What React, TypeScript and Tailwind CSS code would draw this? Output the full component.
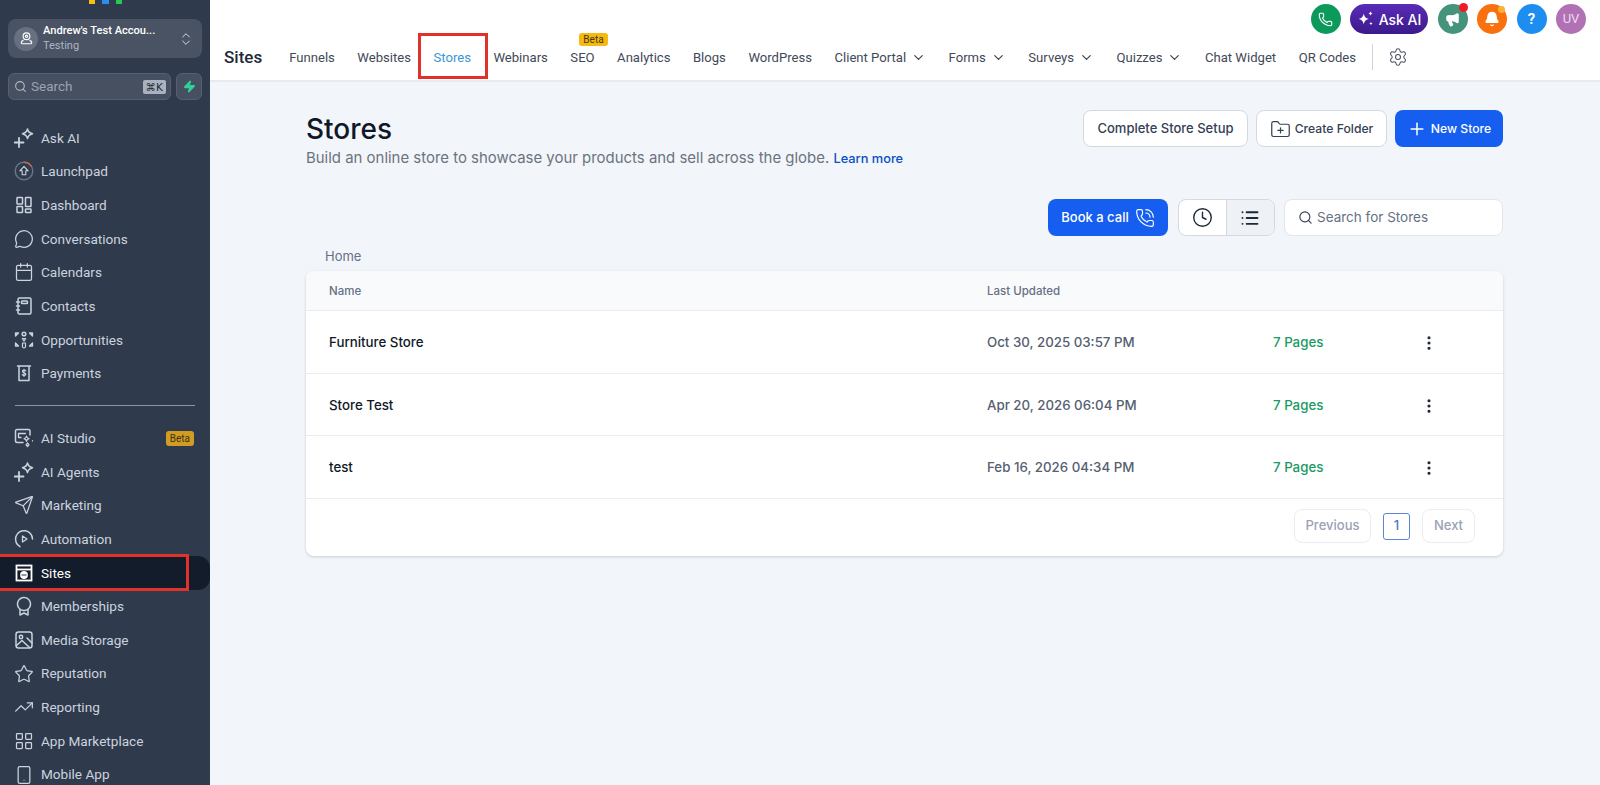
import type { ReactNode } from 'react';
import {
  Bell, Calendar, ChevronDown, ChevronsUpDown, Clock, FolderPlus, LayoutGrid, List, MessageCircle,
  Megaphone, MoreVertical, Phone, PhoneCall, Plus, Search, Send, Settings, Smartphone, Star, TrendingUp, Zap,
} from 'lucide-react';

const stroke = {
  fill: 'none',
  stroke: 'currentColor',
  strokeWidth: 1.5,
  strokeLinecap: 'round' as const,
  strokeLinejoin: 'round' as const,
};

function Ico({ children }: { children: ReactNode }) {
  return (
    <svg viewBox="0 0 20 20" className="w-5 h-5 shrink-0" {...stroke}>
      {children}
    </svg>
  );
}

const SparkIcon = () => (
  <Ico>
    <path d="M5 10v9M.5 14.500h9" strokeWidth="1.800" />
    <path d="M13.500 1c.6 2.800 1.700 3.900 5 4.800-3.300.9-4.400 2-5 4.800-.6-2.800-1.700-3.900-5-4.800 3.300-.9 4.400-2 5-4.800z" />
  </Ico>
);
const LaunchIcon = () => (
  <Ico>
    <circle cx="10" cy="10" r="8.800" stroke="#64748b" />
    <path d="M10 1.200a8.800 8.800 0 0 1 7.300 3.900" stroke="#c2694a" />
    <path d="M10 5.500l-4.200 4.300h2.400v4h3.600v-4h2.400z" strokeWidth="1.100" />
  </Ico>
);
const DashIcon = () => (
  <Ico>
    <rect x="3" y="2.500" width="5.500" height="6.500" rx=".6" />
    <rect x="11.500" y="2.500" width="5.500" height="9" rx=".6" />
    <rect x="3" y="11.500" width="5.500" height="6" rx=".6" />
    <rect x="11.500" y="14" width="5.500" height="3.500" rx=".6" />
  </Ico>
);
const ContactsIcon = () => (
  <Ico>
    <rect x="4" y="2" width="13" height="16" rx="1.500" />
    <rect x="7.500" y="5" width="6" height="2.500" rx=".8" />
    <path d="M2.500 6h3M2.500 10h3M2.500 14h3" />
  </Ico>
);
const OppIcon = () => (
  <Ico>
    <circle cx="10" cy="4" r="1.800" />
    <path d="M8.300 8.500h3.400l-1.700 2.600zM8.500 13v3.500a1.500 1.500 0 0 0 3 0V13z" strokeWidth="1.200" />
    <path d="M1.500 3h3M1.500 3v3M18.500 3h-3M18.500 3v3M1.500 6l3-3M18.500 6l-3-3M1.500 16h3M1.500 16v-3M18.500 16h-3M18.500 16v-3M1.500 13l3 3M18.500 13l-3 3" strokeWidth="1.300" />
  </Ico>
);
const PayIcon = () => (
  <Ico>
    <path d="M3.500 3h13M5 3v14.500h10V3" />
    <path d="M11.800 7.800c-.5-.8-3.400-1-3.400.6 0 1.700 3.400 1 3.400 2.800 0 1.500-2.900 1.500-3.600.5M10 6.300v7" strokeWidth="1.200" />
  </Ico>
);
const StudioIcon = () => (
  <Ico>
    <path d="M9 14.500H3a1.500 1.500 0 0 1-1.500-1.500V3A1.500 1.500 0 0 1 3 1.500h11.500A1.500 1.500 0 0 1 16 3v4" />
    <path d="M4.500 5.500h7M4.500 5.500v4M4.500 9.500h2.500" strokeWidth="1.300" />
    <path d="M12.500 8c.3 1.700 1 2.400 2.500 2.700-1.500.3-2.200 1-2.500 2.700-.3-1.700-1-2.400-2.500-2.700 1.500-.3 2.200-1 2.500-2.700zM13.500 15l1.500 1.800-1.500 1.700-1.500-1.700zM18.500 12.500v.5" strokeWidth="1.200" />
  </Ico>
);
const AutoIcon = () => (
  <Ico>
    <path d="M6 17.700A8.500 8.500 0 1 1 18.500 10" />
    <path d="M8.500 7l4.500 3-4.500 3z" strokeWidth="1.300" />
  </Ico>
);
const SitesIcon = () => (
  <svg viewBox="0 0 20 20" className="w-5 h-5 shrink-0" fill="none" stroke="#fff" strokeWidth="1.800">
    <rect x="2.500" y="2.500" width="15" height="15" />
    <path d="M2.500 6.500h15" />
    <circle cx="10" cy="12" r="3" fill="#fff" />
    <path d="M7.500 12h5" stroke="#111a28" strokeWidth=".9" />
  </svg>
);
const BadgeIcon = () => (
  <Ico>
    <circle cx="10" cy="8" r="6.500" strokeDasharray="3.500 .6" />
    <path d="M6 13.500V19l4-2 4 2v-5.500" />
  </Ico>
);
const MediaIcon = () => (
  <Ico>
    <rect x="2" y="2" width="16" height="16" rx="2.500" />
    <circle cx="7" cy="7" r="1.700" />
    <path d="M2.500 15.500L8 10.500l7.500 7M13 8l5 5" />
  </Ico>
);

type Item = { label: string; icon: ReactNode; badge?: boolean };

const topItems: Item[] = [
  { label: 'Ask AI', icon: <SparkIcon /> },
  { label: 'Launchpad', icon: <LaunchIcon /> },
  { label: 'Dashboard', icon: <DashIcon /> },
  { label: 'Conversations', icon: <MessageCircle size={20} strokeWidth={1.5} /> },
  { label: 'Calendars', icon: <Calendar size={20} strokeWidth={1.5} /> },
  { label: 'Contacts', icon: <ContactsIcon /> },
  { label: 'Opportunities', icon: <OppIcon /> },
  { label: 'Payments', icon: <PayIcon /> },
];

const bottomBefore: Item[] = [
  { label: 'AI Studio', icon: <StudioIcon />, badge: true },
  { label: 'AI Agents', icon: <SparkIcon /> },
  { label: 'Marketing', icon: <Send size={20} strokeWidth={1.5} /> },
  { label: 'Automation', icon: <AutoIcon /> },
];

const bottomAfter: Item[] = [
  { label: 'Memberships', icon: <BadgeIcon /> },
  { label: 'Media Storage', icon: <MediaIcon /> },
  { label: 'Reputation', icon: <Star size={20} strokeWidth={1.5} /> },
  { label: 'Reporting', icon: <TrendingUp size={20} strokeWidth={1.5} /> },
  { label: 'App Marketplace', icon: <LayoutGrid size={20} strokeWidth={1.5} /> },
  { label: 'Mobile App', icon: <Smartphone size={20} strokeWidth={1.5} /> },
];

function NavRow({ item }: { item: Item }) {
  return (
    <div className="h-[33.67px] shrink-0 flex items-center pl-[14px] pr-[16px] gap-[7px] text-[13.6px] text-[#cbd3df]">
      <span className="w-5 flex justify-center">{item.icon}</span>
      <span className="flex-1">{item.label}</span>
      {item.badge && (
        <span className="h-[15px] px-[4px] rounded-[3px] bg-[#d29c22] text-[#3b3418] text-[10px] leading-[15px]">Beta</span>
      )}
    </div>
  );
}

function Sidebar() {
  return (
    <aside className="w-[210px] shrink-0 h-[785px] overflow-hidden bg-[#2f3a4c] flex flex-col font-['Roboto',sans-serif]">
      <div className="h-[4px] shrink-0 flex justify-center gap-[7px] pl-[1px]">
        <span className="w-[6px] bg-[#f6c116]" />
        <span className="w-[7px] bg-[#2a8ff0]" />
        <span className="w-[6px] bg-[#27c94f]" />
      </div>
      <div className="mx-2 mt-[15px] h-[39px] shrink-0 rounded-lg bg-[#495364] flex items-center pl-[6px] pr-[8px] gap-[5px]">
        <span className="w-6 h-6 rounded-full bg-[#667080] flex items-center justify-center text-white">
          <svg viewBox="0 0 20 20" className="w-[15px] h-[15px]" fill="none" stroke="currentColor" strokeWidth="1.500">
            <circle cx="10" cy="7" r="4.500" />
            <circle cx="10" cy="7" r="1.500" />
            <path d="M6 12.500c-2 .5-3 1.500-3 3 0 1 1 1.500 2 1.500h10c1 0 2-.5 2-1.500 0-1.500-1-2.500-3-3" />
          </svg>
        </span>
        <div className="flex-1 min-w-0">
          <div className="text-[11.1px] leading-[14px] font-medium text-white whitespace-nowrap">Andrew's Test Accou...</div>
          <div className="text-[11px] leading-[14px] mt-[1px] text-[#aeb6c3]">Testing</div>
        </div>
        <ChevronsUpDown size={16} strokeWidth={1.5} className="text-[#d5dae2]" />
      </div>
      <div className="mx-2 mt-[15px] flex gap-[5px] h-[27px] shrink-0">
        <div className="flex-1 rounded-md bg-[#465061] border border-[#566072] flex items-center pl-[5px] pr-[4px] gap-[4px]">
          <Search size={13} className="text-[#b3bbc7]" />
          <span className="flex-1 text-[13.500px] text-[#9aa3b2]">Search</span>
          <span className="px-[3px] h-[14px] rounded-[2px] bg-[#aab2bf] text-[#1f2937] text-[10.500px] leading-[14px] font-['DejaVu_Sans',sans-serif]">⌘K</span>
        </div>
        <div className="w-[26px] rounded-md bg-[#465061] border border-[#566072] flex items-center justify-center">
          <Zap size={13} className="text-[#2fd19a]" fill="#2fd19a" />
        </div>
      </div>
      <nav className="mt-[21px] shrink-0 flex flex-col">
        {topItems.map((i) => (
          <NavRow key={i.label} item={i} />
        ))}
        <div className="mx-[15px] my-[15px] h-px shrink-0 bg-[#8b95a7]" />
        {bottomBefore.map((i) => (
          <NavRow key={i.label} item={i} />
        ))}
        <div className="h-[33.67px] shrink-0 bg-[#131c2b] rounded-r-xl flex items-center pl-[14px] gap-[7px] text-[13.6px] text-white">
          <span className="w-5 flex justify-center">
            <SitesIcon />
          </span>
          Sites
        </div>
        {bottomAfter.map((i) => (
          <NavRow key={i.label} item={i} />
        ))}
      </nav>
    </aside>
  );
}

const tabs: { label: string; caret?: boolean; beta?: boolean; active?: boolean }[] = [
  { label: 'Funnels' },
  { label: 'Websites' },
  { label: 'Stores', active: true },
  { label: 'Webinars' },
  { label: 'SEO', beta: true },
  { label: 'Analytics' },
  { label: 'Blogs' },
  { label: 'WordPress' },
  { label: 'Client Portal', caret: true },
  { label: 'Forms', caret: true },
  { label: 'Surveys', caret: true },
  { label: 'Quizzes', caret: true },
  { label: 'Chat Widget' },
  { label: 'QR Codes' },
];

function Header() {
  return (
    <header className="h-[82px] shrink-0 bg-white border-b-2 border-[#e7eaee] font-['Roboto',sans-serif]">
      <div className="h-[38px] flex items-start justify-end pt-[4px] pr-[14px] gap-[9.500px]">
        <span className="w-[30px] h-[30px] rounded-full bg-[#0c9a5c] flex items-center justify-center text-white">
          <Phone size={15} strokeWidth={1.8} />
        </span>
        <span className="w-[78px] h-[30px] rounded-full bg-gradient-to-b from-[#5b2bb8] to-[#3b1a8c] flex items-center justify-center gap-[4px] text-white text-[14px] font-medium font-['Inter',sans-serif]">
          <svg viewBox="0 0 20 20" className="w-[18px] h-[18px]" fill="#fff">
            <path d="M7.500 4c.8 3.700 2 5 5.500 6-3.500 1-4.700 2.300-5.500 6-.8-3.700-2-5-5.500-6 3.500-1 4.700-2.300 5.500-6z" />
            <path d="M15 1.500c.3 1.500.9 2.100 2.500 2.500-1.600.4-2.200 1-2.500 2.500-.3-1.500-.9-2.100-2.500-2.500 1.600-.4 2.200-1 2.500-2.500zM15.500 13c.3 1.200.7 1.600 2 2-1.300.4-1.700.8-2 2-.3-1.200-.7-1.600-2-2 1.300-.4 1.700-.8 2-2z" />
          </svg>
          Ask AI
        </span>
        <span className="relative w-[30px] h-[30px] rounded-full bg-[#44937a] flex items-center justify-center text-white">
          <Megaphone size={15} fill="#fff" />
          <span className="absolute -top-px right-0 w-[9px] h-[9px] rounded-full bg-[#ee1c25]" />
        </span>
        <span className="relative w-[30px] h-[30px] rounded-full bg-[#f9700f] flex items-center justify-center text-white">
          <Bell size={16} fill="#fff" />
          <span className="absolute top-[2px] right-[2px] w-[7px] h-[7px] rounded-full bg-[#f9b233]" />
        </span>
        <span className="w-[30px] h-[30px] rounded-full bg-[#1d8ef0] flex items-center justify-center text-white text-[15px] font-semibold">?</span>
        <span className="w-[30px] h-[30px] rounded-full bg-[#b072b4] flex items-center justify-center text-[#ecdcee] text-[13px]">UV</span>
      </div>
      <div className="relative h-[38px] flex items-center pl-[14px]">
        <span className="text-[17px] font-medium text-[#1f2937] mr-[27px] mt-[2px]">Sites</span>
        <div className="flex items-center gap-[22.5px] pt-[2px] text-[13.1px] text-[#3f4957] whitespace-nowrap">
          {tabs.map((t) => (
            <span key={t.label} className={'relative flex items-center gap-[5px] ' + (t.active ? 'text-[#3b97d3]' : '')}>
              {t.label}
              {t.caret && <ChevronDown size={15} strokeWidth={2} />}
              {t.beta && (
                <span className="absolute -top-[15px] left-[9px] h-[13px] px-[4px] rounded-[3px] bg-[#f5b90f] text-[#463a10] text-[10px] leading-[13px]">Beta</span>
              )}
            </span>
          ))}
        </div>
        <span className="ml-[16px] w-px h-[26px] bg-[#cfd4da]" />
        <Settings size={20} strokeWidth={1.3} className="ml-[15px] text-[#4b5563]" />
      </div>
    </header>
  );
}

function Btn({ children, primary, small }: { children: ReactNode; primary?: boolean; small?: boolean }) {
  return (
    <button
      className={
        'h-[37px] rounded-lg flex items-center justify-center gap-[5px] font-medium whitespace-nowrap ' +
        (small ? 'text-[12.2px] pt-px ' : 'text-[13px] ') +
        (primary ? 'bg-[#155eef] text-white' : 'bg-white border border-[#d5d9de] text-[#344054]')
      }
    >
      {children}
    </button>
  );
}

const rows = [
  { name: 'Furniture Store', date: 'Oct 30, 2025 03:57 PM' },
  { name: 'Store Test', date: 'Apr 20, 2026 06:04 PM' },
  { name: 'test', date: 'Feb 16, 2026 04:34 PM' },
];

function Main() {
  return (
    <main className="flex-1 bg-[#f2f6fa] pl-[96px] pr-[97px] pt-[28px] font-['Inter',sans-serif]">
      <div className="flex justify-between items-start">
        <div>
          <h1 className="text-[28px] leading-[36px] mt-[1px] font-medium text-[#101828]">Stores</h1>
          <p className="text-[14.95px] leading-[20px] text-[#6b7380] mt-[1px]">
            Build an online store to showcase your products and sell across the globe.{' '}
            <span className="text-[12.8px] font-medium text-[#0b4fc4]">Learn more</span>
          </p>
        </div>
        <div className="flex gap-2">
          <Btn>
            <span className="w-[163px] text-center">Complete Store Setup</span>
          </Btn>
          <Btn small>
            <span className="w-[129px] flex items-center justify-center gap-[4px]">
              <FolderPlus size={21} strokeWidth={1.4} />
              Create Folder
            </span>
          </Btn>
          <Btn primary small>
            <span className="w-[108px] flex items-center justify-center gap-[4px]">
              <Plus size={20} strokeWidth={1.8} />
              New Store
            </span>
          </Btn>
        </div>
      </div>
      <div className="flex justify-end gap-[9.500px] mt-[30px]">
        <Btn primary>
          <span className="w-[120px] flex items-center justify-center gap-[6px]">
            Book a call
            <PhoneCall size={20} strokeWidth={1.4} />
          </span>
        </Btn>
        <div className="w-[97px] h-[37px] rounded-lg border border-[#d5d9de] bg-white flex overflow-hidden text-[#1f2937]">
          <span className="flex-1 flex items-center justify-center">
            <Clock size={21} strokeWidth={1.6} />
          </span>
          <span className="flex-1 border-l border-[#d5d9de] bg-[#eef1f5] flex items-center justify-center">
            <List size={20} strokeWidth={2.3} />
          </span>
        </div>
        <div className="w-[219px] h-[37px] rounded-lg border border-[#e2e5e9] bg-white flex items-center pl-[13px] gap-[4px]">
          <Search size={15} strokeWidth={1.8} className="text-[#344054]" />
          <span className="text-[13.5px] text-[#667085]">Search for Stores</span>
        </div>
      </div>
      <div className="mt-[11px] pl-[19px] text-[13px] leading-[18px] text-[#667085]">Home</div>
      <div className="mt-[6px] bg-white rounded-lg shadow-[0_1px_3px_rgba(16,24,40,0.18)] overflow-hidden">
        <div className="h-[40px] pt-[2px] bg-[#f9fafb] border-b border-[#eaecf0] flex items-center text-[11.500px] font-medium text-[#667085]">
          <span className="pl-[23px] w-[681px]">Name</span>
          <span>Last Updated</span>
        </div>
        {rows.map((r) => (
          <div key={r.name} className="h-[62.700px] pt-[2px] border-b border-[#eaecf0] flex items-center text-[13.3px] font-medium">
            <span className="pl-[23px] w-[681px] text-[#101828]">{r.name}</span>
            <span className="w-[286px] text-[#556070]">{r.date}</span>
            <span className="w-[147px] text-[#1b9a63]">7 Pages</span>
            <MoreVertical size={18} strokeWidth={2.2} className="text-[#1f2937]" />
          </div>
        ))}
        <div className="h-[57px] pb-[3px] flex items-center justify-end pr-[28px] text-[13px] font-medium text-[#98a2b3]">
          <span className="h-[34px] w-[77px] rounded-lg border border-[#eaecf0] flex items-center justify-center">Previous</span>
          <span className="ml-[12px] h-[27px] w-[27px] rounded-[3px] border border-[#5b86d8] text-[#4a78d0] flex items-center justify-center">1</span>
          <span className="ml-[12px] h-[34px] w-[53px] rounded-lg border border-[#eaecf0] flex items-center justify-center">Next</span>
        </div>
      </div>
    </main>
  );
}

export default function App() {
  return (
    <div className="relative w-[1600px] h-[785px] overflow-hidden flex">
      <Sidebar />
      <div className="flex-1 flex flex-col min-w-0">
        <Header />
        <Main />
      </div>
      {/* red annotation boxes drawn over the screenshot */}
      <div className="absolute left-[418px] top-[33px] w-[70px] h-[46px] border-[3px] border-[#e0312b]" />
      <div className="absolute left-0 top-[554px] w-[189px] h-[37px] border-[3px] border-l-0 border-[#e0312b]" />
    </div>
  );
}
